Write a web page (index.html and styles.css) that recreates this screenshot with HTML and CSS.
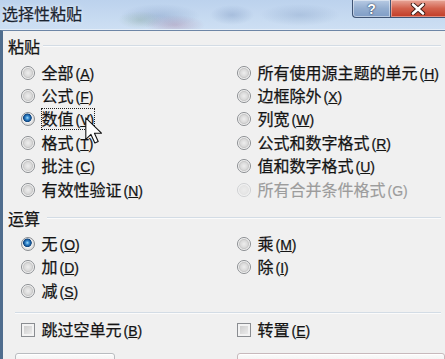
FILE: index.html
```html
<!DOCTYPE html>
<html lang="zh-CN">
<head>
<meta charset="utf-8">
<title>选择性粘贴</title>
<link rel="stylesheet" href="styles.css">
</head>
<body>
<div class="window">
  <div class="titlebar">
    <span class="title">选择性粘贴</span>
    <div class="caption-btns">
      <div class="cbtn help">?</div>
      <div class="cbtn close">
        <svg width="16" height="12" viewBox="0 0 16 12"><path d="M3 1.5 L13 10.5 M13 1.5 L3 10.5" stroke="#3a1a14" stroke-width="4.4" stroke-linecap="round"/><path d="M3 1.5 L13 10.5 M13 1.5 L3 10.5" stroke="#ffffff" stroke-width="2.6" stroke-linecap="round"/></svg>
      </div>
    </div>
  </div>
  <div class="body">
    <div class="group-head"><span>粘贴</span><i class="rule"></i></div>
    <div class="opts">
      <div class="opt"><span class="radio"></span><span class="txt">全部<span class="key">(<u>A</u>)</span></span></div>
      <div class="opt"><span class="radio"></span><span class="txt">所有使用源主题的单元<span class="key">(<u>H</u>)</span></span></div>
      <div class="opt"><span class="radio"></span><span class="txt">公式<span class="key">(<u>F</u>)</span></span></div>
      <div class="opt"><span class="radio"></span><span class="txt">边框除外<span class="key">(<u>X</u>)</span></span></div>
      <div class="opt"><span class="radio checked"></span><span class="txt focus">数值<span class="key">(<u>V</u>)</span></span></div>
      <div class="opt"><span class="radio"></span><span class="txt">列宽<span class="key">(<u>W</u>)</span></span></div>
      <div class="opt"><span class="radio"></span><span class="txt">格式<span class="key">(<u>T</u>)</span></span></div>
      <div class="opt"><span class="radio"></span><span class="txt">公式和数字格式<span class="key">(<u>R</u>)</span></span></div>
      <div class="opt"><span class="radio"></span><span class="txt">批注<span class="key">(<u>C</u>)</span></span></div>
      <div class="opt"><span class="radio"></span><span class="txt">值和数字格式<span class="key">(<u>U</u>)</span></span></div>
      <div class="opt"><span class="radio"></span><span class="txt">有效性验证<span class="key">(<u>N</u>)</span></span></div>
      <div class="opt disabled"><span class="radio"></span><span class="txt">所有合并条件格式<span class="key">(G)</span></span></div>
    </div>
    <div class="group-head second"><span>运算</span><i class="rule"></i></div>
    <div class="opts ops">
      <div class="opt"><span class="radio checked"></span><span class="txt">无<span class="key">(<u>O</u>)</span></span></div>
      <div class="opt"><span class="radio"></span><span class="txt">乘<span class="key">(<u>M</u>)</span></span></div>
      <div class="opt"><span class="radio"></span><span class="txt">加<span class="key">(<u>D</u>)</span></span></div>
      <div class="opt"><span class="radio"></span><span class="txt">除<span class="key">(<u>I</u>)</span></span></div>
      <div class="opt"><span class="radio"></span><span class="txt">减<span class="key">(<u>S</u>)</span></span></div>
    </div>
    <div class="separator"></div>
    <div class="opts checks">
      <div class="opt"><span class="check"></span><span class="txt">跳过空单元<span class="key">(<u>B</u>)</span></span></div>
      <div class="opt"><span class="check"></span><span class="txt">转置<span class="key">(<u>E</u>)</span></span></div>
    </div>
    <div class="buttons">
      <div class="btn b1"></div>
      <div class="btn b2"></div>
    </div>
  </div>
  <svg class="cursor" width="17" height="27" viewBox="0 0 12.6 20"><path d="M0.6 0.6 L0.6 16.6 L4.4 12.9 L7.3 19.3 L9.8 18.2 L7 12 L12.2 12 Z" fill="#ffffff" stroke="#111111" stroke-width="0.8" stroke-linejoin="round"/></svg>
</div>
</body>
</html>
```

FILE: styles.css
```css
html, body {
  margin: 0;
  padding: 0;
}
body {
  width: 445px;
  height: 359px;
  overflow: hidden;
  background: #f0f0f0;
  font-family: "Noto Sans CJK SC", "Noto Sans", sans-serif;
  color: #141414;
}
.window {
  position: relative;
  width: 445px;
  height: 359px;
  overflow: hidden;
}
.titlebar {
  height: 29px;
  display: flex;
  border-bottom: 1px solid #e4edf8;
  background:
    radial-gradient(ellipse 30px 10px at 175px 25px, rgba(150, 80, 120, 0.25), transparent),
    radial-gradient(ellipse 22px 9px at 140px 20px, rgba(110, 150, 110, 0.22), transparent),
    radial-gradient(ellipse 40px 12px at 160px 16px, rgba(90, 120, 170, 0.28), transparent),
    radial-gradient(ellipse 22px 10px at 232px 15px, rgba(90, 120, 170, 0.28), transparent),
    radial-gradient(ellipse 40px 11px at 300px 15px, rgba(100, 130, 175, 0.25), transparent),
    linear-gradient(#bcd2ed, #cddff3);
}
.title {
  margin-left: 2px;
  padding-top: 3px;
  font-size: 16px;
  line-height: 20px;
  color: #1b2430;
  -webkit-text-stroke: 0.25px #1b2430;
  text-shadow: 0 0 5px #e8f2ff, 0 0 2px #e8f2ff;
}
.caption-btns {
  margin-left: auto;
  display: flex;
  align-self: flex-start;
  margin-right: -10px;
}
.cbtn {
  height: 18px;
  box-sizing: border-box;
  border: 1px solid #3f5474;
  border-top: none;
  display: flex;
  align-items: center;
  justify-content: center;
}
.help {
  width: 38px;
  border-radius: 0 0 0 4px;
  border-right: none;
  background: linear-gradient(#b8cbe4, #94aed0 50%, #7f9dc6);
  box-shadow: inset 0 0 0 1px rgba(255, 255, 255, 0.45);
  font-family: "Liberation Sans", sans-serif;
  font-weight: bold;
  font-size: 14px;
  color: #ffffff;
  text-shadow: 0 0 2px #2c3f5c, 0 0 1px #2c3f5c;
}
.close {
  width: 65px;
  background: linear-gradient(#e8a79a, #d2614c 50%, #c13c26);
  box-shadow: inset 0 0 0 1px rgba(255, 220, 210, 0.5);
  padding-right: 10px;
}
.body {
  border-top: 1px solid #6d86a6;
  border-left: 3px solid #4f6d8e;
  padding: 5px 0 0 5px;
  height: 330px;
}
.group-head {
  display: flex;
  align-items: center;
  height: 20px;
  font-size: 16px;
  line-height: 20px;
  -webkit-text-stroke: 0.25px #141414;
}
.group-head.second {
  margin-top: 6.6px;
}
.rule {
  flex: 1;
  height: 0;
  border-top: 1px solid #d3dce5;
  border-bottom: 1px solid #fbfbfb;
  margin-left: 3px;
  margin-right: 4px;
}
.second .rule {
  margin-left: 7px;
}
.opts {
  display: grid;
  grid-template-columns: 216px 1fr;
  grid-auto-rows: 23.4px;
  margin: 5px 0 0 13px;
}
.opts.ops {
  margin-top: 4.3px;
}
.opts.checks {
  margin-top: 4.5px;
}
.opt {
  display: flex;
  align-items: center;
  font-size: 16px;
  line-height: 18px;
  white-space: nowrap;
  -webkit-text-stroke: 0.25px #141414;
}
.txt {
  display: inline-block;
}
.focus {
  outline: 1px dotted #222222;
  outline-offset: 0;
}
.key {
  font-family: "Liberation Sans", sans-serif;
  font-size: 14px;
  margin-left: 2px;
}
.radio {
  flex: none;
  width: 14px;
  height: 14px;
  box-sizing: border-box;
  border-radius: 50%;
  border: 1px solid #8a8d91;
  margin-right: 7px;
  margin-left: -0.5px;
  background: radial-gradient(circle at 50% 50%, #eeeeee 0, #dadada 3.5px, #c8c8c8 4.6px, #f6f6f6 5.6px);
}
.radio.checked {
  background: radial-gradient(circle at 45% 40%, #a4dcf8 0, #3b8fd4 1.7px, #1a5d9f 3.1px, #0f447c 4px, #f2f2f2 4.6px, #e2e2e2 6px);
}
.disabled {
  color: #9c9c9c;
  -webkit-text-stroke: 0.15px #9c9c9c;
}
.disabled .radio {
  border-color: #cfd1d3;
  background: radial-gradient(circle at 50% 50%, #ececec 0, #e4e4e4 4.5px, #f3f3f3 5.5px);
}
.check {
  flex: none;
  width: 14px;
  height: 14px;
  box-sizing: border-box;
  border: 1px solid #8a8d91;
  margin-right: 7px;
  margin-left: -0.5px;
  background: linear-gradient(135deg, #c6c6c6, #f2f2f2);
  box-shadow: inset 0 0 0 2px #f3f3f3;
}
.separator {
  margin: 9.5px 4px 0 7px;
  border-top: 1px solid #d3dce5;
  border-bottom: 1px solid #fbfbfb;
}
.buttons {
  display: flex;
  margin: 11px 0 0 7px;
}
.btn {
  height: 14px;
  box-sizing: border-box;
  border: 1px solid #b9bcc0;
  border-radius: 3px;
  background: linear-gradient(#fbfbfb, #ececec);
  box-shadow: inset 0 1px 0 #ffffff;
}
.b1 {
  width: 105px;
}
.b2 {
  width: 220px;
  margin-left: 122px;
  border-color: #c7b9bc;
}
.cursor {
  position: absolute;
  left: 85px;
  top: 117px;
}
```
